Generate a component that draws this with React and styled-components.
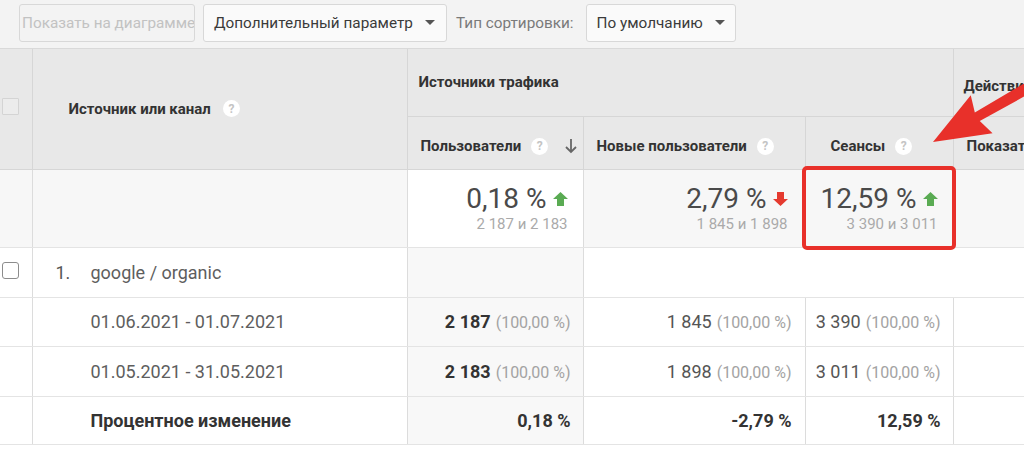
import React from 'react';
import styled, { createGlobalStyle, css } from 'styled-components';

const GlobalStyle = createGlobalStyle`
  html, body {
    margin: 0;
    padding: 0;
    background: #ffffff;
  }
  body {
    font-family: Roboto, 'Liberation Sans', Arial, sans-serif;
    color: #333;
  }
`;

const Page = styled.div`
  position: relative;
  width: 1024px;
  height: 449px;
  overflow: hidden;
  background: #fff;
`;

const Toolbar = styled.div`
  display: flex;
  align-items: center;
  gap: 8px;
  height: 49px;
  box-sizing: border-box;
  padding: 0 0 3px 19px;
  background: #f3f3f3;
  border-bottom: 1px solid #d9d9d9;
`;

const ToolButton = styled.div`
  display: flex;
  align-items: center;
  height: 38px;
  box-sizing: border-box;
  padding: 0 ${({ $caret }) => ($caret ? '12px' : '0')} 0 ${({ $caret }) => ($caret ? '10px' : '2px')};
  width: ${({ $w }) => $w}px;
  border: 1px solid #d8d8d8;
  border-radius: 3px;
  background: ${({ $disabled }) => ($disabled ? '#f3f3f3' : '#fafafa')};
  color: ${({ $disabled }) => ($disabled ? '#c2c2c2' : '#3a3a3a')};
  font-size: 15.3px;
  white-space: nowrap;
  overflow: hidden;
  justify-content: space-between;
`;

const Caret = styled.span`
  width: 0;
  height: 0;
  border-left: 5px solid transparent;
  border-right: 5px solid transparent;
  border-top: 5px solid #555;
  margin-left: 12px;
`;

const ToolLabel = styled.span`
  font-size: 15.3px;
  color: #7a7a7a;
  margin: 0 4px 0 1px;
`;

const Table = styled.table`
  border-collapse: collapse;
  table-layout: fixed;
  width: 1100px;
`;

const HeadCell = styled.th`
  background: #e8e8e8;
  border-right: 1px solid #d6d6d6;
  border-bottom: 1px solid #d6d6d6;
  font-size: 15px;
  font-weight: 700;
  color: #333;
  text-align: left;
  white-space: nowrap;
  overflow: hidden;
  padding: 0 0 0 ${({ $pl }) => $pl ?? 12}px;
  height: ${({ $h }) => $h}px;
  box-sizing: border-box;
  vertical-align: middle;
  ${({ $low }) =>
    $low &&
    css`
      padding-top: 7px;
    `}
`;

const HeadInner = styled.span`
  display: inline-flex;
  align-items: center;
  gap: 10px;
`;

const Help = styled.span`
  display: inline-flex;
  align-items: center;
  justify-content: center;
  width: 17px;
  height: 17px;
  border-radius: 50%;
  background: #fff;
  color: #c4c4c4;
  font-size: 12px;
  font-weight: 700;
  margin-left: ${({ $ml }) => $ml ?? 0}px;
`;

const Check = styled.span`
  display: inline-block;
  width: 15px;
  height: 15px;
  margin-left: 2px;
  border: 1.5px solid ${({ $head }) => ($head ? '#d4d4d4' : '#8c8c8c')};
  border-radius: ${({ $head }) => ($head ? '1px' : '3px')};
  background: ${({ $head }) => ($head ? '#ececec' : '#fff')};
`;

const Cell = styled.td`
  height: ${({ $h }) => $h}px;
  box-sizing: border-box;
  padding: 0 ${({ $pr }) => $pr ?? 12}px 0 ${({ $pl }) => $pl ?? 0}px;
  border-right: 1px solid ${({ $noRight }) => ($noRight ? 'transparent' : '#dcdcdc')};
  border-bottom: 1px solid #e4e4e4;
  background: ${({ $bg }) => $bg || '#fff'};
  text-align: ${({ $align }) => $align || 'left'};
  font-size: 18px;
  color: #5a5a5a;
  white-space: nowrap;
  vertical-align: middle;
  ${({ $boxed }) =>
    $boxed &&
    css`
      outline: 4px solid #e8302a;
      outline-offset: -1px;
      border-radius: 2px;
    `}
`;

const Index = styled.span`
  display: inline-block;
  width: 35px;
  color: #555;
`;

const SourceText = styled.span`
  color: ${({ $strong }) => ($strong ? '#333' : '#5e5e5e')};
  font-weight: ${({ $strong }) => ($strong ? 700 : 400)};
`;

const Big = styled.div`
  display: flex;
  justify-content: flex-end;
  align-items: center;
  gap: 6px;
  font-size: 28px;
  color: #4a4a4a;
  line-height: 30px;
`;

const Sub = styled.div`
  font-size: 15px;
  color: #aaaaaa;
  margin-top: 1px;
`;

const Strong = styled.b`
  color: #333;
  font-weight: 700;
  font-size: ${({ $size }) => $size || 18}px;
`;

const Num = styled.span`
  color: #555;
`;

const Pct = styled.span`
  font-size: 16px;
  color: #a3a3a3;
  margin-left: 5px;
`;

const Arrow = styled.svg`
  flex-shrink: 0;
  margin-left: ${({ $ml }) => $ml ?? 0}px;
`;

const Overlay = styled.svg`
  position: absolute;
  left: 0;
  top: 0;
  pointer-events: none;
`;

const Trend = ({ up }) => (
  <Arrow width="15" height="14" viewBox="0 0 15 14">
    {up ? (
      <polygon points="7.5,0 15,7 11,7 11,14 4,14 4,7 0,7" fill="#5aab53" />
    ) : (
      <polygon points="7.5,14 15,7 11,7 11,0 4,0 4,7 0,7" fill="#e53a2f" />
    )}
  </Arrow>
);

const SortDown = () => (
  <Arrow width="12" height="16" viewBox="0 0 12 16" $ml={7}>
    <path d="M6 1 V14 M1 9 L6 14 L11 9" stroke="#666" strokeWidth="1.8" fill="none" />
  </Arrow>
);

const Summary = ({ value, up, sub, bg, boxed, pr }) => (
  <Cell $h={78} $align="right" $bg={bg} $boxed={boxed} $pr={pr}>
    <Big>
      {value}
      <Trend up={up} />
    </Big>
    <Sub>{sub}</Sub>
  </Cell>
);

const rows = [
  { label: '01.06.2021 - 01.07.2021', users: '2 187', newUsers: '1 845', sessions: '3 390', h: 49 },
  { label: '01.05.2021 - 31.05.2021', users: '2 183', newUsers: '1 898', sessions: '3 011', h: 50 },
];

export default function App() {
  return (
    <Page>
      <GlobalStyle />
      <Toolbar>
        <ToolButton $disabled $w={176}>Показать на диаграмме</ToolButton>
        <ToolButton $caret $w={244}>
          Дополнительный параметр
          <Caret />
        </ToolButton>
        <ToolLabel>Тип сортировки:</ToolLabel>
        <ToolButton $caret $w={150}>
          По умолчанию
          <Caret />
        </ToolButton>
      </Toolbar>

      <Table>
        <colgroup>
          <col style={{ width: 32 }} />
          <col style={{ width: 375 }} />
          <col style={{ width: 176 }} />
          <col style={{ width: 222 }} />
          <col style={{ width: 148 }} />
          <col style={{ width: 147 }} />
        </colgroup>
        <thead>
          <tr>
            <HeadCell rowSpan={2} $h={120} $pl={0}>
              <Check $head />
            </HeadCell>
            <HeadCell rowSpan={2} $h={120} $pl={36}>
              <HeadInner>
                Источник или канал <Help $ml={2}>?</Help>
              </HeadInner>
            </HeadCell>
            <HeadCell colSpan={3} $h={67} $pl={11}>
              Источники трафика
            </HeadCell>
            <HeadCell $h={67} $pl={10} $low>
              Действия
            </HeadCell>
          </tr>
          <tr>
            <HeadCell $h={53} $pl={13} $low>
              <HeadInner>
                Пользователи <Help>?</Help>
                <SortDown />
              </HeadInner>
            </HeadCell>
            <HeadCell $h={53} $pl={13} $low>
              <HeadInner>
                Новые пользователи <Help>?</Help>
              </HeadInner>
            </HeadCell>
            <HeadCell $h={53} $pl={25} $low>
              <HeadInner>
                Сеансы <Help>?</Help>
              </HeadInner>
            </HeadCell>
            <HeadCell $h={53} $pl={13} $low>
              Показатель отказов
            </HeadCell>
          </tr>
        </thead>
        <tbody>
          <tr>
            <Cell $h={78} $bg="#f7f7f7" />
            <Cell $h={78} $bg="#f7f7f7" />
            <Summary value="0,18 %" up sub="2 187 и 2 183" bg="#fff" pr={15} />
            <Summary value="2,79 %" sub="1 845 и 1 898" bg="#f7f7f7" pr={17} />
            <Summary value="12,59 %" up sub="3 390 и 3 011" bg="#f7f7f7" boxed pr={15} />
            <Cell $h={78} $bg="#f7f7f7" />
          </tr>
          <tr>
            <Cell $h={50} $pl={0}>
              <Check />
            </Cell>
            <Cell $h={50} $pl={23}>
              <Index>1.</Index>
              <SourceText>google / organic</SourceText>
            </Cell>
            <Cell $h={50} $bg="#f8f8f8" />
            <Cell $h={50} colSpan={3} $noRight />
          </tr>
          {rows.map((r) => (
            <tr key={r.label}>
              <Cell $h={r.h} />
              <Cell $h={r.h} $pl={58}>
                <SourceText>{r.label}</SourceText>
              </Cell>
              <Cell $h={r.h} $bg="#f8f8f8" $align="right">
                <Strong>{r.users}</Strong>
                <Pct>(100,00 %)</Pct>
              </Cell>
              <Cell $h={r.h} $align="right" $pr={13}>
                <Num>{r.newUsers}</Num>
                <Pct>(100,00 %)</Pct>
              </Cell>
              <Cell $h={r.h} $align="right">
                <Num>{r.sessions}</Num>
                <Pct>(100,00 %)</Pct>
              </Cell>
              <Cell $h={r.h} />
            </tr>
          ))}
          <tr>
            <Cell $h={48} />
            <Cell $h={48} $pl={58}>
              <SourceText $strong>Процентное изменение</SourceText>
            </Cell>
            <Cell $h={48} $bg="#f8f8f8" $align="right">
              <Strong>0,18 %</Strong>
            </Cell>
            <Cell $h={48} $align="right" $pr={13}>
              <Strong>-2,79 %</Strong>
            </Cell>
            <Cell $h={48} $align="right">
              <Strong>12,59 %</Strong>
            </Cell>
            <Cell $h={48} />
          </tr>
        </tbody>
      </Table>

      <Overlay width="1024" height="449" viewBox="0 0 1024 449">
        <g transform="translate(933 142) rotate(-29.7)">
          <polygon points="0,0 56,-22 51,-5 130,-6 130,6 51,5 56,22" fill="#e8302a" />
        </g>
      </Overlay>
    </Page>
  );
}
